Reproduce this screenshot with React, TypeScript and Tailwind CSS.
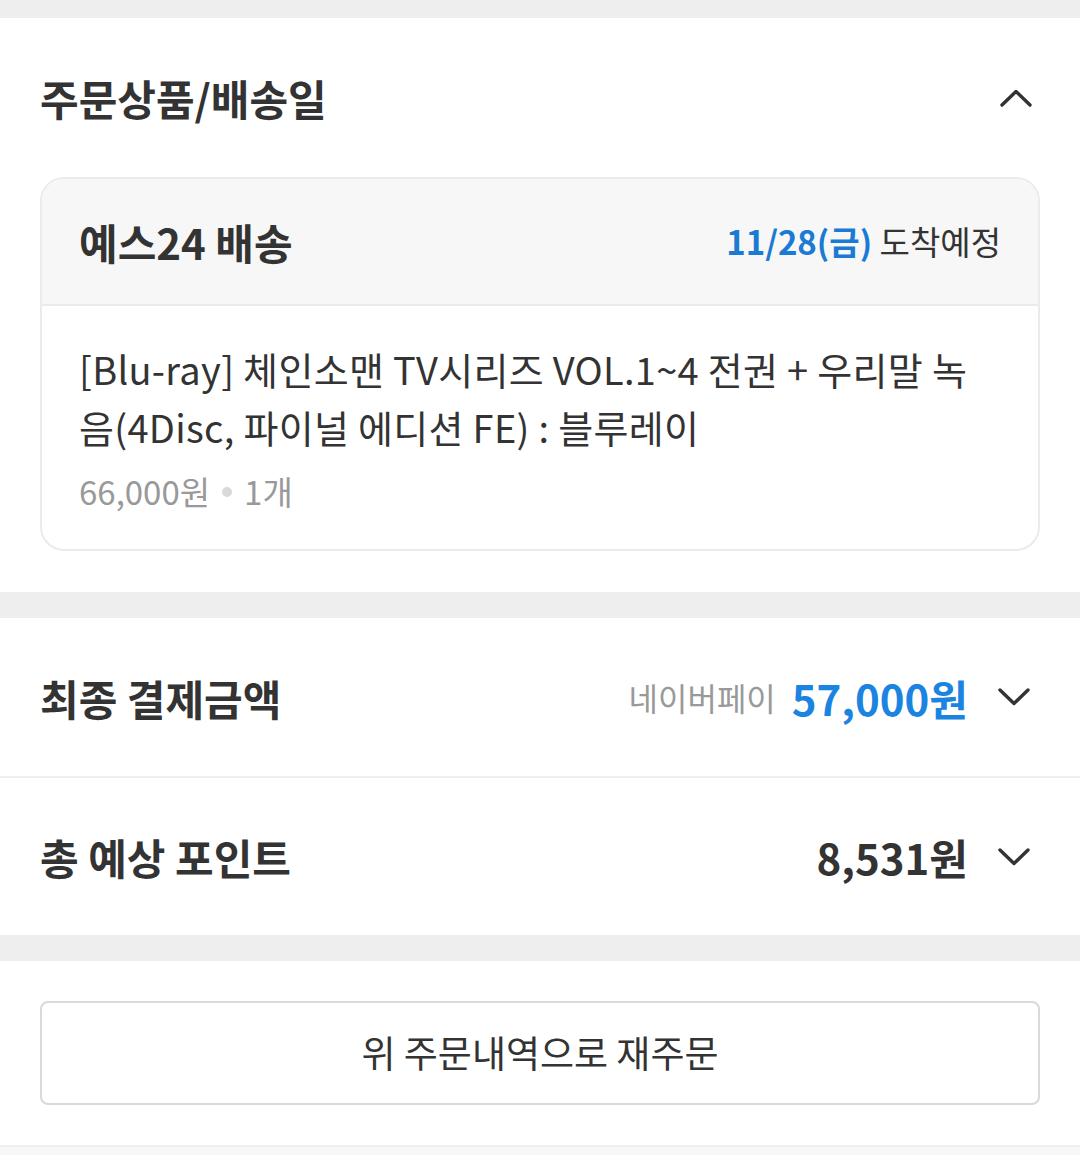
const font = { fontFamily: '"Noto Sans CJK KR", "Noto Sans", sans-serif' };

function Chevron({ up = false }: { up?: boolean }) {
  return (
    <svg width="32" height="18" viewBox="0 0 32 18" fill="none" className="shrink-0">
      <polyline
        points={up ? '2,16 16,2.5 30,16' : '2,2 16,15.5 30,2'}
        stroke="#333"
        strokeWidth="3.4"
        strokeLinecap="round"
        strokeLinejoin="round"
      />
    </svg>
  );
}

function SummaryRow({
  label,
  height,
  children,
}: {
  label: string;
  height: string;
  children: React.ReactNode;
}) {
  return (
    <div className={`flex items-center justify-between bg-white pl-10 pr-[50px] ${height}`}>
      <span className="text-[42px] font-bold text-[#333]">{label}</span>
      <div className="flex items-center">
        {children}
        <div className="ml-[30px]">
          <Chevron />
        </div>
      </div>
    </div>
  );
}

export default function App() {
  return (
    <div className="min-h-[1155px] w-[1080px] bg-[#f7f7f7]" style={font}>
      <div className="h-[18px] bg-[#eeeeee]" />

      {/* 주문상품 */}
      <section className="bg-white px-10 pb-[41px]">
        <div className="flex h-[159px] items-center justify-between">
          <h2 className="text-[42px] font-bold text-[#333]">주문상품/배송일</h2>
          <div className="mr-[8px]">
            <Chevron up />
          </div>
        </div>

        <div className="overflow-hidden rounded-[24px] border-2 border-[#ebebeb]">
          <div className="flex h-[127px] items-center justify-between border-b-2 border-[#ebebeb] bg-[#f7f7f7] px-[37px]">
            <span className="text-[42px] font-bold text-[#333]">예스24 배송</span>
            <span className="text-[33px] text-[#333]">
              <span className="font-bold text-[#1a7ad4]">11/28(금)</span> 도착예정
            </span>
          </div>
          <div className="px-[37px] pt-[34px] pb-[37px]">
            <p className="text-[38px] leading-[58px] tracking-[0.3px] text-[#333]">
              [Blu-ray] 체인소맨 TV시리즈 VOL.1~4 전권 + 우리말 녹음(4Disc, 파이널 에디션 FE) : 블루레이
            </p>
            <div className="mt-[16px] flex h-[40px] items-center text-[33px] text-[#999]">
              <span>66,000원</span>
              <span className="mx-[12px] h-[10px] w-[10px] rounded-full bg-[#d9d9d9]" />
              <span>1개</span>
            </div>
          </div>
        </div>
      </section>

      <div className="h-[26px] bg-[#eeeeee]" />

      {/* 결제 / 포인트 */}
      <SummaryRow label="최종 결제금액" height="h-[158px]">
        <span className="mr-[16px] text-[32px] text-[#999]">네이버페이</span>
        <span className="text-[42px] font-bold text-[#1b84e0]">57,000원</span>
      </SummaryRow>
      <div className="h-[2px] bg-[#eeeeee]" />
      <SummaryRow label="총 예상 포인트" height="h-[157px]">
        <span className="text-[42px] font-bold text-[#333]">8,531원</span>
      </SummaryRow>

      <div className="h-[26px] bg-[#eeeeee]" />

      {/* 재주문 */}
      <div className="border-b-2 border-[#eeeeee] bg-white px-10 py-[40px]">
        <button className="flex h-[104px] w-full items-center justify-center rounded-[8px] border-2 border-[#d9d9d9] bg-white text-[37px] text-[#333]">
          위 주문내역으로 재주문
        </button>
      </div>
    </div>
  );
}
